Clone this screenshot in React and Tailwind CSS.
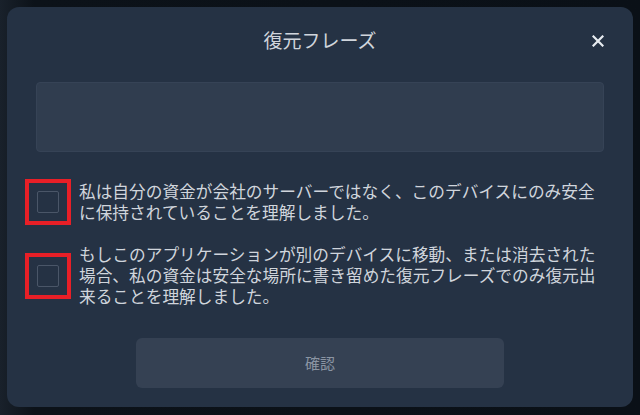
import { useState } from "react";

const font = { fontFamily: '"Noto Sans CJK JP", "Noto Sans", sans-serif' };

const terms = [
  "私は自分の資金が会社のサーバーではなく、このデバイスにのみ安全に保持されていることを理解しました。",
  "もしこのアプリケーションが別のデバイスに移動、または消去された場合、私の資金は安全な場所に書き留めた復元フレーズでのみ復元出来ることを理解しました。",
];

function CheckRow({ text, checked, onToggle }) {
  return (
    <label className="flex items-center gap-5 cursor-pointer">
      {/* checkbox with highlight frame */}
      <span className="relative ml-[1px] shrink-0">
        <span className="pointer-events-none absolute -inset-[12px] border-[4px] border-[#e81f27]" />
        <button
          type="button"
          onClick={onToggle}
          className={`block w-[22px] h-[22px] rounded-[2px] border-[1.5px] border-[#4a5668] ${
            checked ? "bg-[#4a5668]" : "bg-transparent"
          }`}
        />
      </span>
      <p className="text-[16.7px] leading-[21px] text-[#d0d5dc]">{text}</p>
    </label>
  );
}

export default function App() {
  const [checks, setChecks] = useState([false, false]);

  const toggle = (i) =>
    setChecks((prev) => prev.map((c, idx) => (idx === i ? !c : c)));

  return (
    <div
      className="w-[640px] h-[415px] pt-[7px] pl-[7px] bg-[linear-gradient(to_right,#19212b_0px,#0c1219_34px,#0a1017_100%)]"
      style={font}
    >
      <div className="w-[626px] h-[400px] rounded-[12px] bg-[#253244] px-[29px] flex flex-col">
        {/* Header */}
        <div className="h-[66px] grid grid-cols-[1fr_auto_1fr] items-center">
          <div />
          <h1 className="text-[19px] text-[#d0d5dc] leading-none pb-[1px]">
            復元フレーズ
          </h1>
          <div className="flex justify-end pt-[1px]">
            <button className="w-[12px] h-[12px] text-[#e8ecf1]">
              <svg viewBox="0 0 12 12" width="12" height="12">
                <path
                  d="M1.5 1.5 L10.5 10.5 M10.5 1.5 L1.5 10.5"
                  stroke="currentColor"
                  strokeWidth="2.2"
                  strokeLinecap="square"
                />
              </svg>
            </button>
          </div>
        </div>

        {/* Phrase box */}
        <div className="mt-[9px] h-[70px] rounded-[4px] bg-[#303d4f] border border-[#364356]" />

        {/* Terms */}
        <div className="mt-[29px] flex flex-col gap-[21px]">
          {terms.map((t, i) => (
            <CheckRow key={i} text={t} checked={checks[i]} onToggle={() => toggle(i)} />
          ))}
        </div>

        {/* Confirm */}
        <button
          disabled={!checks.every(Boolean)}
          className="mt-[31px] mx-auto w-[368px] h-[50px] shrink-0 rounded-[6px] bg-[#354153] text-[15px] text-[#8b95a3]"
        >
          確認
        </button>
      </div>
    </div>
  );
}
